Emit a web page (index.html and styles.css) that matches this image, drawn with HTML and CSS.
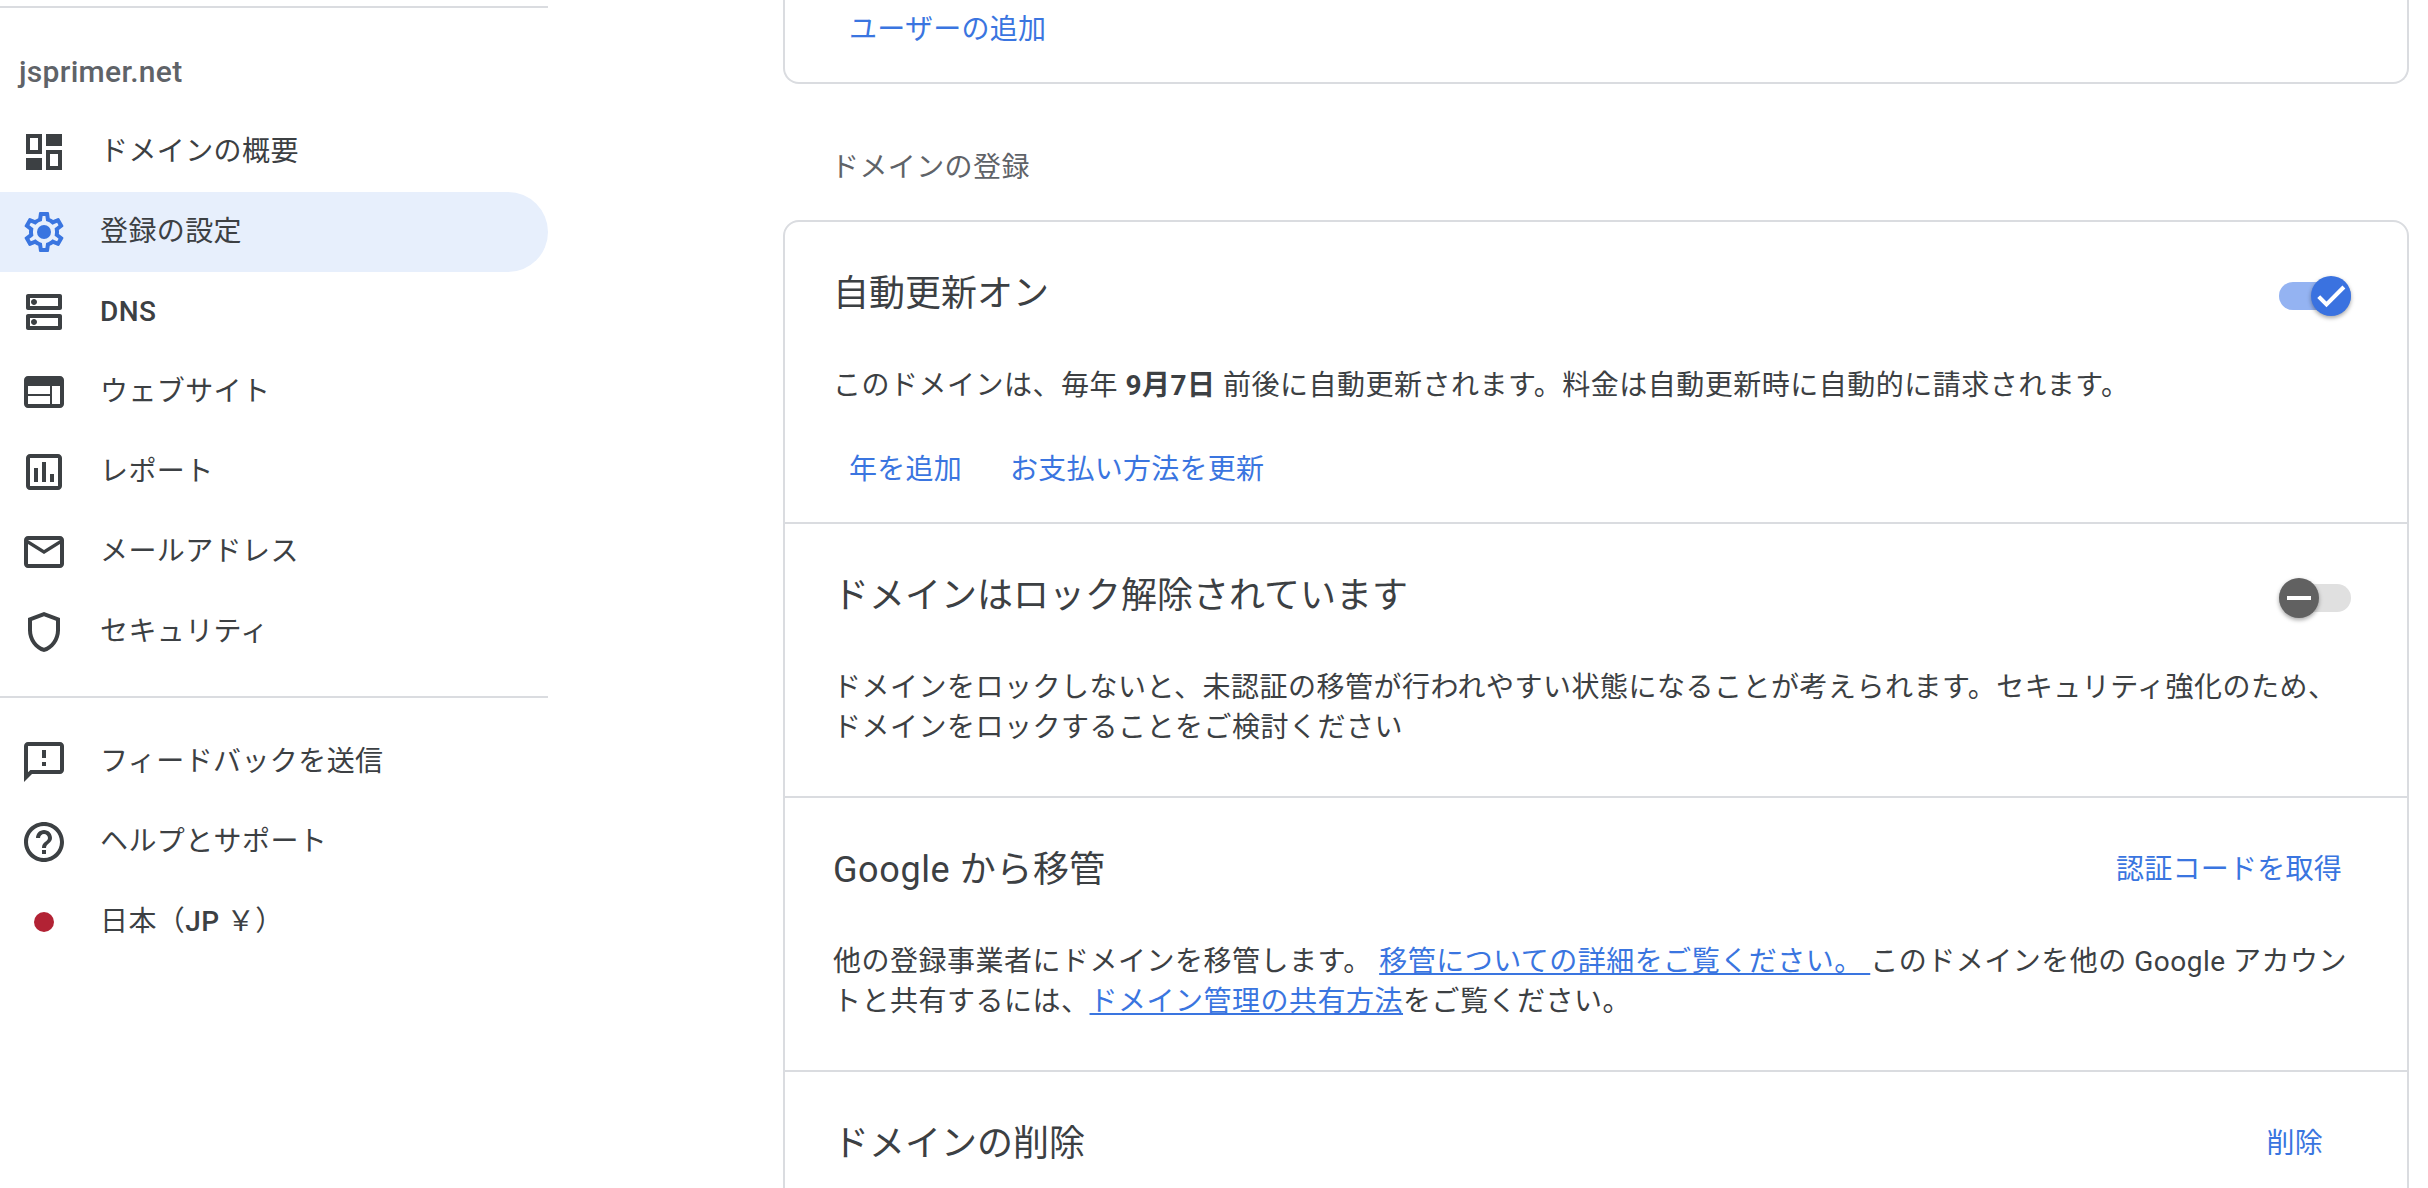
FILE: index.html
```html
<!DOCTYPE html>
<html lang="ja">
  <head>
    <title>jsprimer.net - 登録の設定</title>
    <meta name="viewport" content="width=device-width, initial-scale=1" />
    <link rel="stylesheet" href="styles.css">
  </head>

  <body>
    <div class="container">
      <nav class="sidebar">
        <div class="rule rule-top"></div>
        <div class="domain-name">jsprimer.net</div>
        <a class="nav-item">
          <svg class="nav-icon" viewBox="0 0 24 24"><path fill-rule="evenodd" d="M3 3h8v10H3zM5 5v6h4V5zM13 3h8v6h-8zM13 11h8v10h-8zM15 13v6h4v-6zM3 15h8v6H3z"/></svg>
          ドメインの概要
        </a>
        <a class="nav-item active">
          <svg class="nav-icon" viewBox="0 0 24 24"><path d="M19.43 12.98c.04-.32.07-.64.07-.98 0-.34-.03-.66-.07-.98l2.11-1.65c.19-.15.24-.42.12-.64l-2-3.46c-.09-.16-.26-.25-.44-.25-.06 0-.12.01-.17.03l-2.49 1c-.52-.4-1.08-.73-1.69-.98l-.38-2.65C14.46 2.18 14.25 2 14 2h-4c-.25 0-.46.18-.49.42l-.38 2.65c-.61.25-1.17.59-1.69.98l-2.49-1c-.06-.02-.12-.03-.18-.03-.17 0-.34.09-.43.25l-2 3.46c-.13.22-.07.49.12.64l2.11 1.65c-.04.32-.07.65-.07.98 0 .33.03.66.07.98l-2.11 1.65c-.19.15-.24.42-.12.64l2 3.46c.09.16.26.25.44.25.06 0 .12-.01.17-.03l2.49-1c.52.4 1.08.73 1.69.98l.38 2.65c.03.24.24.42.49.42h4c.25 0 .46-.18.49-.42l.38-2.65c.61-.25 1.17-.59 1.69-.98l2.49 1c.06.02.12.03.18.03.17 0 .34-.09.43-.25l2-3.46c.12-.22.07-.49-.12-.64l-2.11-1.65zm-1.98-1.71c.04.31.05.52.05.73 0 .21-.02.43-.05.73l-.14 1.13.89.7 1.08.84-.7 1.21-1.27-.51-1.04-.42-.9.68c-.43.32-.84.56-1.25.73l-1.06.43-.16 1.13-.2 1.35h-1.4l-.19-1.35-.16-1.13-1.06-.43c-.43-.18-.83-.41-1.23-.71l-.91-.7-1.06.43-1.27.51-.7-1.21 1.08-.84.89-.7-.14-1.13c-.03-.31-.05-.54-.05-.74s.02-.43.05-.73l.14-1.13-.89-.7-1.08-.84.7-1.21 1.27.51 1.04.42.9-.68c.43-.32.84-.56 1.25-.73l1.06-.43.16-1.13.2-1.35h1.39l.19 1.35.16 1.13 1.06.43c.43.18.83.41 1.23.71l.91.7 1.06-.43 1.27-.51.7 1.21-1.07.85-.89.7.14 1.13z"/><circle cx="12" cy="12" r="3.5"/></svg>
          登録の設定
        </a>
        <a class="nav-item">
          <svg class="nav-icon" viewBox="0 0 24 24"><path d="M19 15v4H5v-4h14m1-2H4c-.55 0-1 .45-1 1v6c0 .55.45 1 1 1h16c.55 0 1-.45 1-1v-6c0-.55-.45-1-1-1zM7 18.5c-.82 0-1.5-.67-1.5-1.5s.68-1.5 1.5-1.5 1.5.67 1.5 1.5-.67 1.5-1.5 1.5zM19 5v4H5V5h14m1-2H4c-.55 0-1 .45-1 1v6c0 .55.45 1 1 1h16c.55 0 1-.45 1-1V4c0-.55-.45-1-1-1zM7 8.5c-.82 0-1.5-.67-1.5-1.5S6.18 5.5 7 5.5s1.5.68 1.5 1.5S7.83 8.5 7 8.5z"/></svg>
          <span class="latin">DNS</span>
        </a>
        <a class="nav-item">
          <svg class="nav-icon" viewBox="0 0 24 24"><path d="M20 4H4c-1.1 0-1.99.9-1.99 2L2 18c0 1.1.9 2 2 2h16c1.1 0 2-.9 2-2V6c0-1.1-.9-2-2-2zm-5 14H4v-4h11v4zm0-5H4V9h11v4zm5 5h-4V9h4v9z"/></svg>
          ウェブサイト
        </a>
        <a class="nav-item">
          <svg class="nav-icon" viewBox="0 0 24 24"><path d="M19 3H5c-1.1 0-2 .9-2 2v14c0 1.1.9 2 2 2h14c1.1 0 2-.9 2-2V5c0-1.1-.9-2-2-2zm0 16H5V5h14v14zM7 10h2v7H7zm4-3h2v10h-2zm4 6h2v4h-2z"/></svg>
          レポート
        </a>
        <a class="nav-item">
          <svg class="nav-icon" viewBox="0 0 24 24"><path d="M20 4H4c-1.1 0-1.99.9-1.99 2L2 18c0 1.1.9 2 2 2h16c1.1 0 2-.9 2-2V6c0-1.1-.9-2-2-2zm0 14H4V8l8 5 8-5v10zm-8-7L4 6h16l-8 5z"/></svg>
          メールアドレス
        </a>
        <a class="nav-item">
          <svg class="nav-icon" viewBox="0 0 24 24"><path d="M12 2L4 5v6.09c0 5.05 3.41 9.76 8 10.91 4.59-1.15 8-5.86 8-10.91V5l-8-3zm6 9.09c0 4-2.55 7.7-6 8.83-3.45-1.13-6-4.82-6-8.83v-4.7l6-2.25 6 2.25v4.7z"/></svg>
          セキュリティ
        </a>
        <div class="rule rule-mid"></div>
        <a class="nav-item">
          <svg class="nav-icon" viewBox="0 0 24 24"><path d="M20 2H4c-1.1 0-1.99.9-1.99 2L2 22l4-4h14c1.1 0 2-.9 2-2V4c0-1.1-.9-2-2-2zm0 14H5.17L4 17.17V4h16v12zM11 12h2v2h-2zm0-6h2v4h-2z"/></svg>
          フィードバックを送信
        </a>
        <a class="nav-item">
          <svg class="nav-icon" viewBox="0 0 24 24"><path d="M11 18h2v-2h-2v2zm1-16C6.48 2 2 6.48 2 12s4.48 10 10 10 10-4.48 10-10S17.52 2 12 2zm0 18c-4.41 0-8-3.59-8-8s3.59-8 8-8 8 3.59 8 8-3.59 8-8 8zm0-14c-2.21 0-4 1.79-4 4h2c0-1.1.9-2 2-2s2 .9 2 2c0 2-3 1.75-3 5h2c0-2.25 3-2.5 3-5 0-2.21-1.79-4-4-4z"/></svg>
          ヘルプとサポート
        </a>
        <a class="nav-item">
          <span class="nav-icon flag-box"><span class="flag"></span></span>
          <span>日本（<span class="latin">JP</span> ￥）</span>
        </a>
      </nav>

      <main class="content">
        <div class="card card-cut">
          <a class="link-btn">ユーザーの追加</a>
        </div>

        <h2 class="section-label">ドメインの登録</h2>

        <div class="card">
          <section class="row row-renew">
            <div class="row-head">
              <h3>自動更新オン</h3>
              <div class="toggle on">
                <span class="knob">
                  <svg viewBox="0 0 24 24"><path d="M9 16.2L4.8 12l-1.4 1.4L9 19 21 7l-1.4-1.4z"/></svg>
                </span>
              </div>
            </div>
            <p>このドメインは、毎年 <b>9月7日</b> 前後に自動更新されます。料金は自動更新時に自動的に請求されます。</p>
            <div class="actions">
              <a class="link-btn">年を追加</a>
              <a class="link-btn">お支払い方法を更新</a>
            </div>
          </section>

          <section class="row">
            <div class="row-head">
              <h3>ドメインはロック解除されています</h3>
              <div class="toggle off">
                <span class="knob"><span class="dash"></span></span>
              </div>
            </div>
            <p>ドメインをロックしないと、未認証の移管が行われやすい状態になることが考えられます。セキュリティ強化のため、<br>ドメインをロックすることをご検討ください</p>
          </section>

          <section class="row">
            <div class="row-head">
              <h3><span class="brand">Google から</span>移管</h3>
              <a class="link-btn">認証コードを取得</a>
            </div>
            <p>他の登録事業者にドメインを移管します。 <a class="inline-link">移管についての詳細をご覧ください。 </a> このドメインを他の Google アカウン<br>トと共有するには、<a class="inline-link">ドメイン管理の共有方法</a>をご覧ください。</p>
          </section>

          <section class="row">
            <div class="row-head">
              <h3>ドメインの削除</h3>
              <a class="link-btn link-delete">削除</a>
            </div>
          </section>
        </div>
      </main>
    </div>
  </body>
</html>
```

FILE: styles.css
```css
* {
  box-sizing: border-box;
}

html,
body {
  height: 100%;
}

body {
  margin: 0;
  overflow: hidden;
  background: #fff;
  color: #3c4043;
  font-family: Roboto, "Noto Sans CJK JP", sans-serif;
  font-size: 28px;
  line-height: 40px;
}

.container {
  display: flex;
  height: 1188px;
  overflow: hidden;
}

/* left nav */
.sidebar {
  flex: none;
  width: 548px;
  padding-top: 6px;
}

.rule {
  height: 2px;
  background: #dadce0;
}

.rule-mid {
  margin: 24px 0 24px;
}

.domain-name {
  margin: 44px 0 20px 19px;
  height: 40px;
  color: #5f6368;
  font-size: 30px;
  font-weight: 500;
  letter-spacing: 0.3px;
}

.nav-item {
  display: flex;
  align-items: center;
  gap: 32px;
  height: 80px;
  padding-left: 20px;
  border-radius: 0 40px 40px 0;
  letter-spacing: 0.4px;
}

.nav-item.active {
  background: #e7effc;
}

.nav-icon {
  flex: none;
  width: 48px;
  height: 48px;
  fill: #3c4043;
}

.active .nav-icon {
  fill: #3a75e0;
}

.latin {
  font-weight: 500;
}

.flag-box {
  display: flex;
  align-items: center;
  justify-content: center;
}

.flag {
  width: 20px;
  height: 20px;
  border-radius: 50%;
  background: #b22234;
  filter: blur(0.6px);
}

/* main column */
.content {
  flex: none;
  width: 1626px;
  margin-left: 235px;
}

.card {
  border: 2px solid #dadce0;
  border-radius: 16px;
}

.card-cut {
  height: 84px;
  padding: 10px 0 0 48px;
  border-top: 0;
  border-radius: 0 0 16px 16px;
}

.section-label {
  margin: 64px 0 32px 48px;
  color: #5f6368;
  font-size: 28px;
  font-weight: 400;
  line-height: 40px;
  letter-spacing: 0.4px;
}

.row {
  padding: 52px 49px 48px 48px;
  border-top: 2px solid #dadce0;
}

.row:first-child {
  border-top: 0;
}

.row-renew {
  padding-bottom: 32px;
}

.row-head {
  display: flex;
  justify-content: space-between;
  align-items: flex-start;
  height: 40px;
}

h3 {
  margin: 0;
  font-size: 36px;
  font-weight: 400;
  line-height: 40px;
}

.brand {
  letter-spacing: 0.6px;
}

p {
  margin: 52px 0 0;
  letter-spacing: 0.5px;
}

.actions {
  display: flex;
  gap: 16px;
  margin-top: 44px;
}

.link-btn {
  padding: 0 16px;
  color: #3a75e0;
  letter-spacing: 0.25px;
}

.link-delete {
  margin-right: 19px;
}

.inline-link {
  color: #3a75e0;
  text-decoration: underline;
}

/* toggles */
.toggle {
  position: relative;
  flex: none;
  width: 72px;
  height: 28px;
  margin: 8px 7px 0 0;
  border-radius: 14px;
}

.toggle.on {
  background: #94b3f2;
}

.toggle.off {
  background: #e0e0e0;
}

.knob {
  position: absolute;
  top: -6px;
  display: flex;
  align-items: center;
  justify-content: center;
  width: 40px;
  height: 40px;
  border-radius: 50%;
  box-shadow: 0 2px 4px rgba(0, 0, 0, 0.35);
}

.on .knob {
  right: 0;
  background: #3a72e0;
}

.off .knob {
  left: 0;
  background: #616161;
}

.knob svg {
  flex: none;
  width: 36px;
  height: 36px;
  fill: #fff;
  stroke: #fff;
  stroke-width: 0.8;
}

.dash {
  width: 24px;
  height: 4px;
  background: #fff;
}
```
